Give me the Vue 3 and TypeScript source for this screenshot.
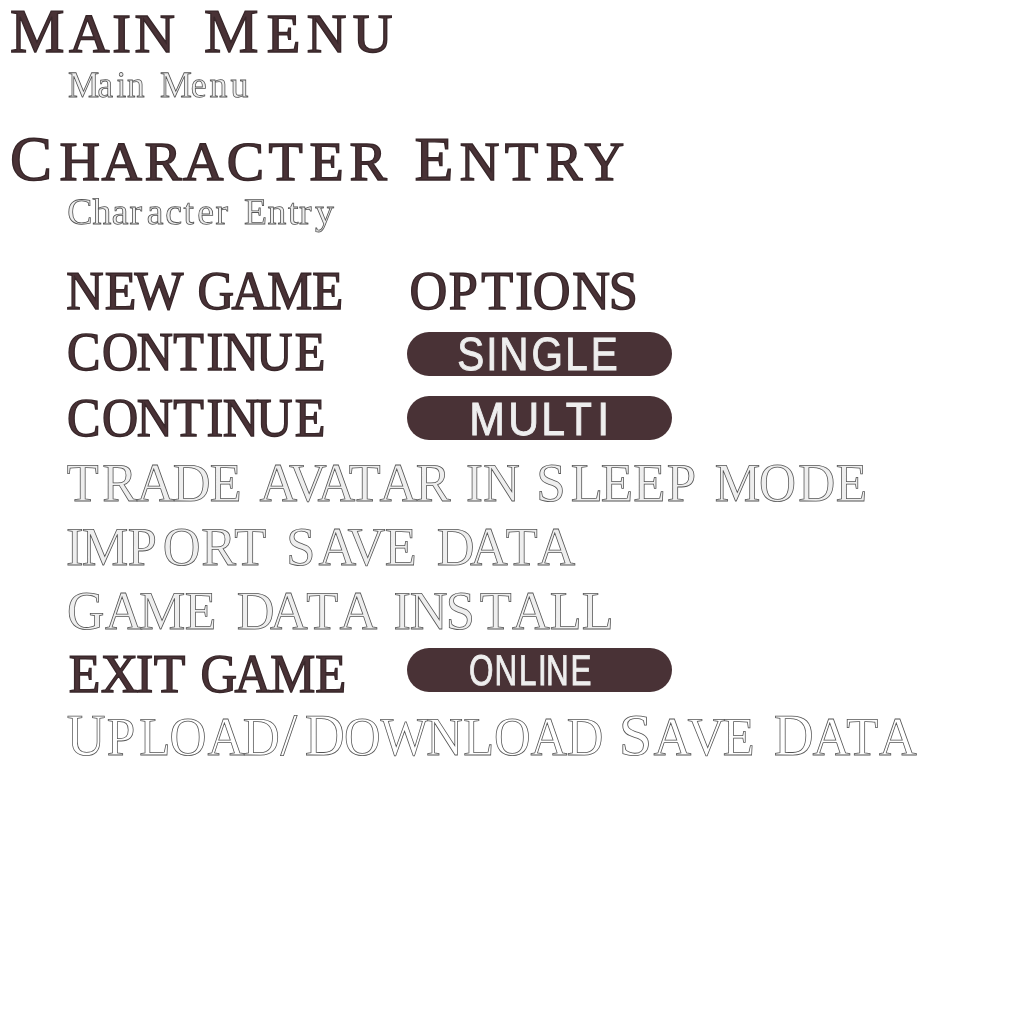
<script setup lang="ts">
type Tone = 'dark' | 'pale' | 'ghost' | 'label'

// [text, left ink edge of every letter, font size, glyph width factor]
type Word = [string, number[], number, number]

interface Badge {
  words: Word[]
  baseline: number
  top: number
}

interface Row {
  tone: Tone
  baseline: number
  words: Word[]
  badge?: Badge
}

const rows: Row[] = [
  {
    tone: 'dark',
    baseline: 51.5,
    words: [
      ['M', [11], 62.5, 0.98],
      ['AIN', [69, 114, 135.5], 55, 1.02],
      ['M', [205], 62.5, 0.98],
      ['ENU', [267.5, 307.5, 353.5], 55, 1],
    ],
  },
  {
    tone: 'pale',
    baseline: 33,
    words: [
      ['Main', [68.5, 98.5, 117, 127.5], 37, 0.95],
      ['Menu', [160.5, 192, 210, 230.5], 37, 0.97],
    ],
  },
  {
    tone: 'dark',
    baseline: 51.5,
    words: [
      ['C', [12], 63, 1],
      ['HARACTER', [60.5, 101.5, 145.5, 183, 228.5, 269.5, 310.5, 350.5], 55, 1.02],
      ['E', [415.5], 62.5, 1.02],
      ['NTRY', [460.5, 505.5, 546.5, 584.5], 55, 1],
    ],
  },
  {
    tone: 'pale',
    baseline: 32,
    words: [
      ['Character', [68.5, 92.5, 113, 130, 148, 166.5, 183.5, 198.5, 216], 37, 1.02],
      ['Entry', [244.5, 268, 288, 299.5, 315], 37, 1.02],
    ],
  },
  {
    tone: 'dark',
    baseline: 52.5,
    words: [
      ['NEW', [67, 105.5, 134.5], 54.5, 0.95],
      ['GAME', [199, 231.5, 268, 313], 54.5, 0.93],
      ['OPTIONS', [411, 449.5, 482, 517, 534.5, 573, 612], 54.5, 0.96],
    ],
  },
  {
    tone: 'dark',
    baseline: 50,
    words: [['CONTINUE', [68.5, 103.5, 137.5, 174, 208, 223.5, 257, 295.5], 54.5, 0.92]],
    badge: { top: 12, baseline: 37.5, words: [['SINGLE', [51.5, 82.5, 95.5, 126.5, 161.5, 187], 46.5, 0.87]] },
  },
  {
    tone: 'dark',
    baseline: 52,
    words: [['CONTINUE', [68.5, 103.5, 137.5, 174, 208, 223.5, 257, 295.5], 54.5, 0.92]],
    badge: { top: 12, baseline: 38.5, words: [['MULTI', [65.5, 104, 137.5, 159.5, 193.5], 46.5, 0.92]] },
  },
  {
    tone: 'pale',
    baseline: 52.5,
    words: [
      ['TRADE', [67.5, 103, 136.5, 173.5, 210.5], 54.5, 0.96],
      ['AVATAR', [259.5, 289, 317.5, 349.5, 379.5, 416.5], 54.5, 0.96],
      ['IN', [467.5, 484], 54.5, 0.93],
      ['SLEEP', [539.5, 571.5, 601.5, 634, 667.5], 54.5, 0.97],
      ['MODE', [715.5, 760.5, 799, 836.5], 54.5, 0.94],
    ],
  },
  {
    tone: 'pale',
    baseline: 53,
    words: [
      ['IMPORT', [67.5, 82.5, 128.5, 164.5, 202, 235], 54.5, 0.96],
      ['SAVE', [289.5, 318.5, 347.5, 385.5], 54.5, 0.96],
      ['DATA', [437.5, 470, 506.5, 537.5], 54.5, 0.96],
    ],
  },
  {
    tone: 'pale',
    baseline: 53,
    words: [
      ['GAME', [68.5, 105, 140, 185.5], 54.5, 0.95],
      ['DATA', [237.5, 270, 307, 339.5], 54.5, 0.96],
      ['INSTALL', [395, 410.5, 449, 480.5, 512, 550.5, 582.5], 54.5, 0.96],
    ],
  },
  {
    tone: 'dark',
    baseline: 52,
    words: [
      ['EXIT', [69.5, 101.5, 137.5, 154.5], 54.5, 0.95],
      ['GAME', [202, 234.5, 271, 316], 54.5, 0.93],
    ],
    badge: { top: 8, baseline: 36.5, words: [['ONLINE', [63.5, 90, 114.5, 133.5, 141.5, 166], 43, 0.73]] },
  },
  {
    tone: 'ghost',
    baseline: 50.5,
    words: [
      ['U', [67.5], 59.5, 0.9],
      ['PLOAD', [107.5, 140, 171, 207.5, 243.5], 54.5, 0.94],
      ['/', [280.5], 60, 1],
      ['D', [305.5], 59.5, 0.93],
      ['OWNLOAD', [345.5, 380.5, 427, 464, 495.5, 530.5, 567.5], 54.5, 0.93],
      ['S', [622.5], 59, 1.02],
      ['AVE', [653.5, 687.5, 723.5], 54.5, 0.96],
      ['D', [774.5], 59.5, 0.93],
      ['ATA', [812.5, 847, 879], 54.5, 0.96],
    ],
  },
]

const ctx = document.createElement('canvas').getContext('2d')!

// Place every letter so that its ink starts at the listed edge.
function fit(word: Word, baseline: number, family: string) {
  const [text, edges, size, factor] = word
  ctx.font = `${size * 10}px "${family}"`
  const x = [...text].map((letter, i) => {
    const bearing = -ctx.measureText(letter).actualBoundingBoxLeft / 10
    return ((edges[i] - edges[0]) / factor - bearing).toFixed(2)
  })
  return {
    'font-size': size,
    transform: `translate(${edges[0]} ${baseline}) scale(${factor} 1)`,
    x: x.join(' '),
  }
}
</script>

<template>
  <main class="menu">
    <div v-for="(row, i) in rows" :key="i" class="row">
      <svg class="line" :class="[row.tone, { short: row.badge }]" height="64">
        <text v-for="(word, j) in row.words" :key="j" v-bind="fit(word, row.baseline, 'Liberation Serif')">{{ word[0] }}</text>
      </svg>
      <div v-if="row.badge" class="badge" :style="{ marginTop: row.badge.top + 'px' }">
        <svg class="line label" height="44">
          <text v-for="(word, j) in row.badge.words" :key="j" v-bind="fit(word, row.badge.baseline, 'Liberation Sans')">{{ word[0] }}</text>
        </svg>
      </div>
    </div>
  </main>
</template>

<style scoped>
.menu {
  width: 1024px;
  height: 1024px;
  display: flex;
  flex-direction: column;
  overflow: hidden;
  will-change: transform;
}
.row {
  height: 64px;
  flex: none;
  display: flex;
  align-items: flex-start;
}
.line {
  display: block;
  width: 100%;
  flex: none;
  overflow: visible;
}
.line.short {
  width: 407px;
}
.line text {
  font-family: "Liberation Serif", serif;
  font-kerning: none;
  text-rendering: geometricPrecision;
  vector-effect: non-scaling-stroke;
  stroke-linejoin: miter;
}
.dark text {
  fill: #493236;
  stroke: #38272a;
  stroke-width: 1.4px;
}
.pale text {
  fill: #eee;
  stroke: #555;
  stroke-width: 0.8px;
}
.ghost text {
  fill: #fff;
  stroke: #555;
  stroke-width: 0.8px;
}
.label text {
  font-family: "Liberation Sans", sans-serif;
  fill: #eee;
  stroke: #eee;
  stroke-width: 0.9px;
}
.badge {
  width: 265px;
  height: 44px;
  border-radius: 22px;
  background: #493236;
}
</style>

<style>
body {
  margin: 0;
  background: #fff;
}
</style>
